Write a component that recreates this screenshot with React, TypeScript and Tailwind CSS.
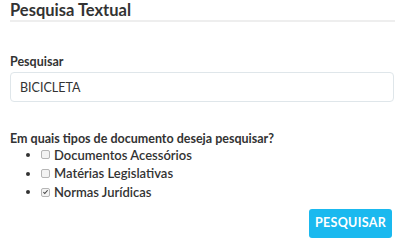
import React, { useState } from 'react';

const tipos = [
  { id: 'acessorios', label: 'Documentos Acessórios', checked: false },
  { id: 'materias', label: 'Matérias Legislativas', checked: false },
  { id: 'normas', label: 'Normas Jurídicas', checked: true },
];

export default function App() {
  const [termo, setTermo] = useState('BICICLETA');
  const [marcados, setMarcados] = useState(tipos.map((t) => t.checked));

  return (
    <div className="w-[400px] h-[242px] bg-white text-[#333] font-['Lato',sans-serif] pl-[10px] pr-[5px]">
      {/* Titulo */}
      <h2 className="text-[16.5px] font-bold leading-[20px] pt-[0px] border-b-2 border-[#eeeeee]">
        Pesquisa Textual
      </h2>

      {/* Campo de pesquisa */}
      <div className="mt-[32px]">
        <label className="block text-[12.5px] font-bold leading-[16px] mb-[2px]">Pesquisar</label>
        <input
          value={termo}
          onChange={(e) => setTermo(e.target.value)}
          className="w-[384px] h-[30px] border border-[#dfe6ea] rounded-[4px] px-[9px] text-[12.5px] text-[#333] outline-none"
        />
      </div>

      {/* Tipos de documento */}
      <div className="mt-[30px]">
        <p className="text-[12.5px] font-bold leading-[14px]">Em quais tipos de documento deseja pesquisar?</p>
        <ul className="list-disc pl-[31px] text-[13px] leading-[18px] font-semibold mt-[-1px]">
          {tipos.map((t, i) => (
            <li key={t.id}>
              <label
                className="inline-flex items-center gap-[4px] cursor-pointer"
                onClick={() => setMarcados((m) => m.map((v, j) => (j === i ? !v : v)))}
              >
                <span className="w-[9px] h-[9px] border border-[#b5b5b5] rounded-[2px] bg-[#f3f3f3] flex items-center justify-center">
                  {marcados[i] && (
                    <svg viewBox="0 0 10 10" className="w-[8px] h-[8px]">
                      <path d="M2 5.2 L4 7.2 L8 2.5" fill="none" stroke="#444" strokeWidth="1.6" />
                    </svg>
                  )}
                </span>
                {t.label}
              </label>
            </li>
          ))}
        </ul>
      </div>

      <div className="flex justify-end pr-[3px] mt-[8px]">
        <button className="w-[83px] h-[29px] bg-[#1ab9ef] text-white text-[12.5px] font-bold rounded-[3px] tracking-[0.3px]">
          PESQUISAR
        </button>
      </div>
    </div>
  );
}
